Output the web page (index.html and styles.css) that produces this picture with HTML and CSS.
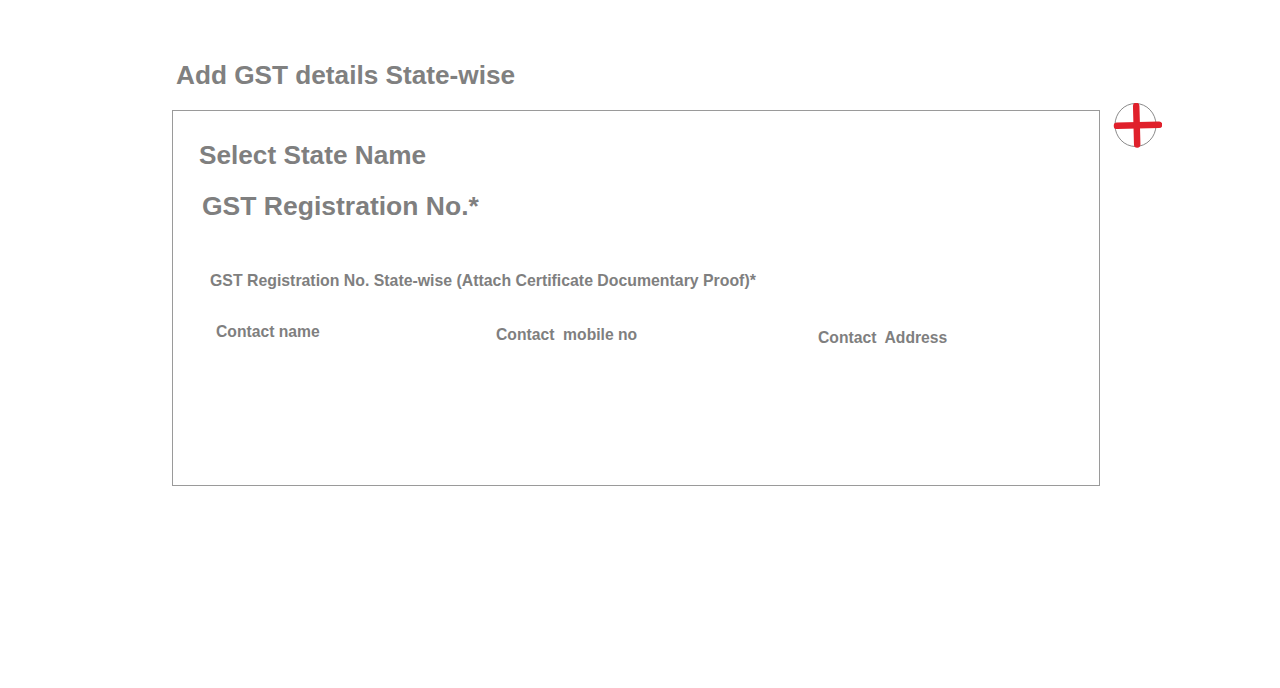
FILE: index.html
```html
<!DOCTYPE html>
<html lang="en">
<head>
<meta charset="utf-8">
<title>Add GST details State-wise</title>
<link rel="stylesheet" href="styles.css">
</head>
<body>
<div class="page">
  <h1 class="title">Add GST details State-wise</h1>
  <div class="row">
    <div class="card">
      <div class="state">Select State Name</div>
      <div class="gst">GST Registration No.*</div>
      <div class="attach">GST Registration No. State-wise (Attach Certificate Documentary Proof)*</div>
      <div class="contacts">
        <div class="c-name">Contact name</div>
        <div class="c-mobile">Contact&nbsp; mobile no</div>
        <div class="c-address">Contact&nbsp; Address</div>
      </div>
    </div>
    <button class="add" type="button" aria-label="Add">
      <svg width="50" height="48" viewBox="0 0 50 48">
        <ellipse cx="23.5" cy="22" rx="20.5" ry="21.5" fill="#fff" stroke="#8a8a8a" stroke-width="1"/>
        <path d="M5 22.8 L47 21.8" stroke="#e0202b" stroke-width="6.5" stroke-linecap="round"/>
        <path d="M24.2 3 L25.2 41.5" stroke="#e0202b" stroke-width="6.5" stroke-linecap="round"/>
      </svg>
    </button>
  </div>
</div>
</body>
</html>
```

FILE: styles.css
```css
html, body {
  margin: 0;
  padding: 0;
  background: #ffffff;
}
body {
  font-family: "Liberation Sans", Arial, sans-serif;
  color: #7f7f7f;
}
.page {
  padding: 60px 0 0 172px;
}
.title {
  margin: 0 0 20px 4px;
  font-size: 26.2px;
  line-height: 30px;
  font-weight: bold;
  color: #808080;
}
.row {
  display: flex;
  align-items: flex-start;
}
.card {
  box-sizing: border-box;
  width: 928px;
  height: 376px;
  border: 1px solid #9a9a9a;
  padding: 29px 0 0 26px;
  display: flex;
  flex-direction: column;
  align-items: flex-start;
}
.state {
  font-size: 26.2px;
  line-height: 30px;
  font-weight: bold;
}
.gst {
  margin: 21px 0 0 3px;
  font-size: 26.5px;
  line-height: 31px;
  font-weight: bold;
}
.attach {
  margin: 50px 0 0 11px;
  font-size: 15.85px;
  line-height: 18px;
  font-weight: bold;
}
.contacts {
  display: flex;
  align-items: flex-start;
  margin-top: 33px;
  font-size: 15.7px;
  line-height: 18px;
  font-weight: bold;
}
.c-name {
  margin-left: 17px;
  width: 280px;
}
.c-mobile {
  margin-top: 3px;
  width: 322px;
}
.c-address {
  margin-top: 6px;
}
.add {
  margin: -7px 0 0 12px;
  padding: 0;
  border: 0;
  background: none;
  width: 50px;
  height: 48px;
  cursor: pointer;
}
.add svg {
  display: block;
}
```
